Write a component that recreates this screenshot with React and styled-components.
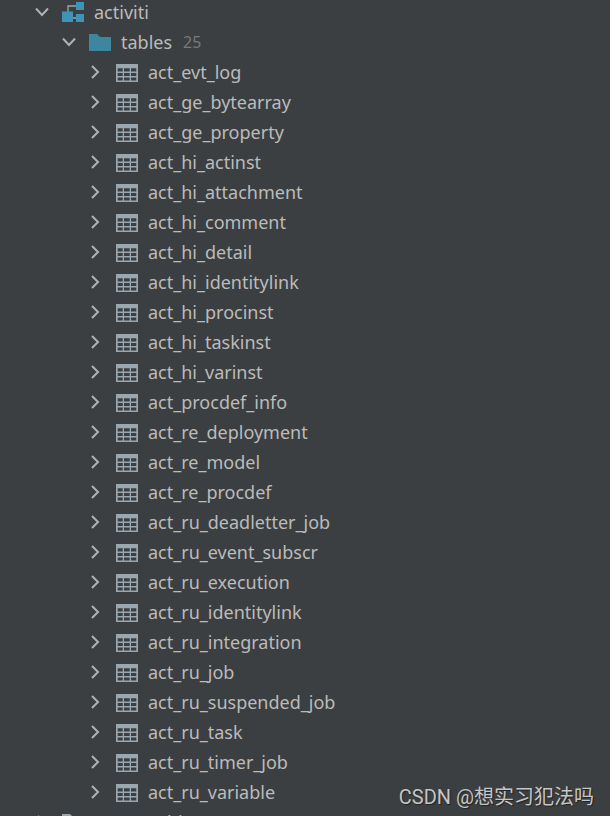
import React, { useState } from "react";
import styled, { createGlobalStyle } from "styled-components";

const TABLES = [
  "act_evt_log",
  "act_ge_bytearray",
  "act_ge_property",
  "act_hi_actinst",
  "act_hi_attachment",
  "act_hi_comment",
  "act_hi_detail",
  "act_hi_identitylink",
  "act_hi_procinst",
  "act_hi_taskinst",
  "act_hi_varinst",
  "act_procdef_info",
  "act_re_deployment",
  "act_re_model",
  "act_re_procdef",
  "act_ru_deadletter_job",
  "act_ru_event_subscr",
  "act_ru_execution",
  "act_ru_identitylink",
  "act_ru_integration",
  "act_ru_job",
  "act_ru_suspended_job",
  "act_ru_task",
  "act_ru_timer_job",
  "act_ru_variable",
];

function Chevron({ open }) {
  return (
    <ChevronIcon viewBox="0 0 16 16" aria-hidden="true">
      <path d={open ? "M2 4.500L8 11L14 4.500" : "M4 2L10 8L4 14"} />
    </ChevronIcon>
  );
}

function SchemaIcon() {
  return (
    <Icon viewBox="0 0 22 22" aria-hidden="true">
      <path d="M6 11V5H14M11 17H14" fill="none" stroke="#9aa7b0" strokeWidth="1.3" />
      <path d="M14 1H22V9H14ZM0 10.500H11V21H0ZM14 13H22V21H14Z" fill="#3d94b6" />
    </Icon>
  );
}

function FolderIcon({ color }) {
  return (
    <Icon viewBox="0 0 22 22" aria-hidden="true">
      <path d="M0 3H8L11 6H22V20H0Z" fill={color} />
    </Icon>
  );
}

function TableIcon() {
  return (
    <Icon viewBox="0 0 22 22" aria-hidden="true">
      <path
        d="M0 3H22V21H0ZM1.700 7.300V10.500H6.700V7.300ZM8 7.300V10.500H13.700V7.300ZM15 7.300V10.500H20.300V7.300ZM1.700 12V15H6.700V12ZM8 12V15H13.700V12ZM15 12V15H20.300V12ZM1.700 16.500V19.500H6.700V16.500ZM8 16.500V19.500H13.700V16.500ZM15 16.500V19.500H20.300V16.500Z"
        fill="#9aa7b0"
        fillRule="evenodd"
      />
    </Icon>
  );
}

function TreeItem({ label, count, icon, level, open, onToggle }) {
  return (
    <Row type="button" $level={level} aria-expanded={open} onClick={onToggle}>
      <Chevron open={open} />
      {icon}
      <Label>{label}</Label>
      {count && <Count>{count}</Count>}
    </Row>
  );
}

function App() {
  const [closed, setClosed] = useState({});
  const [expanded, setExpanded] = useState({});

  const toggleGroup = (name) => {
    setClosed({ ...closed, [name]: !closed[name] });
  };

  const toggleNode = (name) => {
    setExpanded({ ...expanded, [name]: !expanded[name] });
  };

  return (
    <Panel>
      <GlobalStyle />
      <Tree>
        <li>
          <TreeItem
            label="activiti"
            icon={<SchemaIcon />}
            level={0}
            open={!closed.schema}
            onToggle={() => toggleGroup("schema")}
          />
          {!closed.schema && (
            <Branch>
              <li>
                <TreeItem
                  label="tables"
                  count={TABLES.length}
                  icon={<FolderIcon color="#3e86a0" />}
                  level={1}
                  open={!closed.tables}
                  onToggle={() => toggleGroup("tables")}
                />
                {!closed.tables && (
                  <Branch>
                    {TABLES.map((name) => (
                      <li key={name}>
                        <TreeItem
                          label={name}
                          icon={<TableIcon />}
                          level={2}
                          open={!!expanded[name]}
                          onToggle={() => toggleNode(name)}
                        />
                      </li>
                    ))}
                  </Branch>
                )}
              </li>
            </Branch>
          )}
        </li>
        <li>
          <TreeItem
            label="Server Objects"
            icon={<FolderIcon color="#9aa7b0" />}
            level={0}
            open={!!expanded.objects}
            onToggle={() => toggleNode("objects")}
          />
        </li>
      </Tree>
      <Watermark>CSDN @想实习犯法吗</Watermark>
    </Panel>
  );
}

export default App;

const GlobalStyle = createGlobalStyle`
  body {
    margin: 0;
    background: #3c3f41;
  }
`;

const Panel = styled.main`
  position: relative;
  height: 100vh;
  overflow: hidden;
  background: #3c3f41;
  color: #bbbbbb;
  font-family: "Noto Sans", "Noto Sans CJK SC", sans-serif;
  font-size: 18px;
`;

const Branch = styled.ul`
  list-style: none;
  margin: 0;
  padding: 0;
`;

const Tree = styled(Branch)`
  margin-top: -3px;
`;

const Row = styled.button`
  display: flex;
  align-items: center;
  width: 100%;
  height: 30px;
  padding: 0 0 0 ${(props) => 34 + props.$level * 27}px;
  border: 0;
  background: none;
  color: inherit;
  font: inherit;
  line-height: 30px;
  text-align: left;
  white-space: nowrap;
  cursor: pointer;
`;

const ChevronIcon = styled.svg`
  flex: none;
  width: 16px;
  height: 16px;
  margin-right: 12px;
  fill: none;
  stroke: #afb1b3;
  stroke-width: 2;
`;

const Icon = styled.svg`
  flex: none;
  width: 22px;
  height: 22px;
  margin-right: 10px;
`;

const Label = styled.span`
  flex: none;
`;

const Count = styled.span`
  margin-left: 11px;
  color: #787878;
  font-size: 16px;
`;

const Watermark = styled.div`
  position: absolute;
  right: 16px;
  bottom: 4px;
  color: #c4c5c6;
  font-family: Roboto, "Noto Sans CJK SC", sans-serif;
  font-size: 20px;
  line-height: 30px;
  text-shadow: 1px 1px 1px #222222;
`;
